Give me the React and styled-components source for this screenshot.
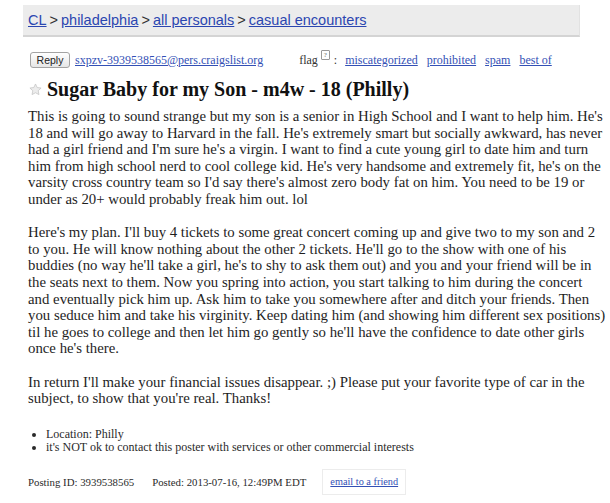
import React from "react";
import styled, { createGlobalStyle } from "styled-components";

const GlobalStyle = createGlobalStyle`
  html, body { margin: 0; padding: 0; background: #fff; }
  body { font-family: "Liberation Serif", "Times New Roman", serif; color: #1e1e1e; }
  a { color: #2f4db2; }
`;

const Page = styled.div`
  width: 610px;
  height: 503px;
  overflow: hidden;
  box-sizing: border-box;
  padding: 5px 0 0 23px;
  display: flex;
  flex-direction: column;
  & > * { flex-shrink: 0; }
`;

const Breadcrumbs = styled.nav`
  width: 557px;
  height: 32px;
  box-sizing: border-box;
  background: #ececec;
  border-bottom: 2px solid #d4d4d4;
  border-right: 1px solid #e2e2e2;
  padding-left: 5px;
  display: flex;
  align-items: center;
  font-family: "Liberation Sans", Arial, sans-serif;
  font-size: 14.5px;
  color: #333;
`;

const Crumb = styled.a`
  color: #2b46b0;
  text-decoration: underline;
`;

const Sep = styled.span`
  margin: 0 3px;
  color: #333;
`;

const ActionRow = styled.div`
  margin-top: 15px;
  padding-left: 7px;
  display: flex;
  align-items: center;
  height: 16px;
  font-size: 12px;
`;

const ReplyButton = styled.button`
  width: 40px;
  height: 16px;
  box-sizing: border-box;
  padding: 0;
  border: 1px solid #a3a3a3;
  border-radius: 3px;
  background: linear-gradient(#ffffff, #e6e6e6);
  font-family: "Liberation Sans", Arial, sans-serif;
  font-size: 10.5px;
  color: #222;
  line-height: 14px;
`;

const SmallLink = styled.a`
  color: #3350b5;
  text-decoration: underline;
  font-size: 12px;
`;

const EmailLink = styled(SmallLink)`
  margin-left: 5px;
`;

const FlagGroup = styled.div`
  margin-left: 36px;
  display: flex;
  align-items: center;
  gap: 9px;
  color: #333;
`;

const FlagLabel = styled.span`
  display: flex;
  align-items: flex-start;
  margin-right: -1px;
`;

const HelpMark = styled.sup`
  display: inline-block;
  margin-left: 3px;
  margin-top: -3px;
  width: 7px;
  height: 8px;
  border: 1px solid #999;
  border-radius: 1px;
  font-size: 7px;
  line-height: 8px;
  text-align: center;
  color: #666;
  vertical-align: top;
`;

const Colon = styled.span`
  margin-left: 4px;
`;

const TitleRow = styled.div`
  margin-top: 9px;
  padding-left: 6px;
  display: flex;
  align-items: center;
  gap: 5px;
`;

const Title = styled.h2`
  margin: 0;
  font-size: 20px;
  font-weight: bold;
  line-height: 24px;
  color: #111;
`;

const Body = styled.section`
  margin-top: 7px;
  padding-left: 5px;
  width: 578px;
  font-size: 14.8px;
  line-height: 16.6px;
  color: #1e1e1e;
`;

const Paragraph = styled.p`
  margin: 0 0 16.6px 0;
  &:last-child { margin-bottom: 0; }
`;

const Notices = styled.ul`
  margin: 21px 0 0 0;
  padding-left: 23px;
  font-size: 12px;
  line-height: 13px;
  color: #2a2a2a;
`;

const Footer = styled.div`
  margin-top: 15px;
  padding-left: 5px;
  display: flex;
  align-items: center;
  font-size: 10.8px;
  color: #2a2a2a;
`;

const Meta = styled.span`
  margin-right: ${(p) => p.$gap}px;
`;

const ShareBox = styled.div`
  border: 1px solid #ececec;
  padding: 5px 7px 6px 7px;
  line-height: 13px;
`;

const ShareLink = styled(SmallLink)`
  font-size: 10.3px;
`;

function Star() {
  return (
    <svg width="13" height="13" viewBox="0 0 24 24">
      <path
        d="M12 1.8l3.1 6.6 7.2.9-5.3 5 1.4 7.1L12 18l-6.4 3.4L7 14.3 1.7 9.3l7.2-.9z"
        fill="#ececec"
        stroke="#c4c4c4"
        strokeWidth="1.4"
        strokeLinejoin="round"
      />
    </svg>
  );
}

export default function App() {
  return (
    <>
      <GlobalStyle />
      <Page>
        <Breadcrumbs>
          <Crumb href="#">CL</Crumb>
          <Sep>&gt;</Sep>
          <Crumb href="#">philadelphia</Crumb>
          <Sep>&gt;</Sep>
          <Crumb href="#">all personals</Crumb>
          <Sep>&gt;</Sep>
          <Crumb href="#">casual encounters</Crumb>
        </Breadcrumbs>

        <ActionRow>
          <ReplyButton>Reply</ReplyButton>
          <EmailLink href="#">sxpzv-3939538565@pers.craigslist.org</EmailLink>
          <FlagGroup>
            <FlagLabel>
              flag<HelpMark>?</HelpMark>
              <Colon>:</Colon>
            </FlagLabel>
            <SmallLink href="#">miscategorized</SmallLink>
            <SmallLink href="#">prohibited</SmallLink>
            <SmallLink href="#">spam</SmallLink>
            <SmallLink href="#">best of</SmallLink>
          </FlagGroup>
        </ActionRow>

        <TitleRow>
          <Star />
          <Title>Sugar Baby for my Son - m4w - 18 (Philly)</Title>
        </TitleRow>

        <Body>
          <Paragraph>
            This is going to sound strange but my son is a senior in High School and I want to help him. He's 18 and will go away to Harvard in the fall. He's extremely smart but socially awkward, has never had a girl friend and I'm sure he's a virgin. I want to find a cute young girl to date him and turn him from high school nerd to cool college kid. He's very handsome and extremely fit, he's on the varsity cross country team so I'd say there's almost zero body fat on him. You need to be 19 or under as 20+ would probably freak him out. lol
          </Paragraph>
          <Paragraph>
            Here's my plan. I'll buy 4 tickets to some great concert coming up and give two to my son and 2 to you. He will know nothing about the other 2 tickets. He'll go to the show with one of his buddies (no way he'll take a girl, he's to shy to ask them out) and you and your friend will be in the seats next to them. Now you spring into action, you start talking to him during the concert and eventually pick him up. Ask him to take you somewhere after and ditch your friends. Then you seduce him and take his virginity. Keep dating him (and showing him different sex positions) til he goes to college and then let him go gently so he'll have the confidence to date other girls once he's there.
          </Paragraph>
          <Paragraph>
            In return I'll make your financial issues disappear. ;) Please put your favorite type of car in the subject, to show that you're real. Thanks!
          </Paragraph>
        </Body>

        <Notices>
          <li>Location: Philly</li>
          <li>it's NOT ok to contact this poster with services or other commercial interests</li>
        </Notices>

        <Footer>
          <Meta $gap={18}>Posting ID: 3939538565</Meta>
          <Meta $gap={16}>Posted: 2013-07-16, 12:49PM EDT</Meta>
          <ShareBox>
            <ShareLink href="#">email to a friend</ShareLink>
          </ShareBox>
        </Footer>
      </Page>
    </>
  );
}
